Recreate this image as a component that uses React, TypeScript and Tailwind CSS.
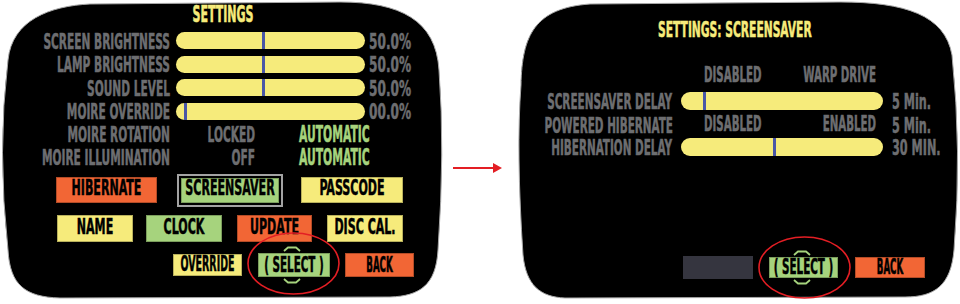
import React from "react";

const Y = "bg-[#f6eb7b]";

function Lbl({ children, cls = "text-[11.8px] scale-y-[1.75]", color = "text-[#6d6e71]" }: { children: React.ReactNode; cls?: string; color?: string }) {
  return <span className={"inline-block leading-[0.75] whitespace-nowrap [-webkit-text-stroke:0.3px_currentColor] " + cls + " " + color}>{children}</span>;
}

function Shape({ d }: { d: string }) {
  return (
    <svg className="absolute inset-0 overflow-visible" width="100%" height="100%">
      <path d={d} fill="#000" stroke="#a8a8a8" strokeWidth="1" />
    </svg>
  );
}

function Btn({ cls, children, tcls = "text-[12.3px] scale-y-[1.67]" }: { cls: string; children: React.ReactNode; tcls?: string }) {
  return (
    <div className={"flex items-center justify-center border border-black/25 " + cls}>
      <Lbl cls={tcls} color="text-black">{children}</Lbl>
    </div>
  );
}

function Chevron({ up }: { up: boolean }) {
  return (
    <svg width="18" height="6" viewBox="0 0 18 6">
      <path d={up ? "M1 5 L5 1.5 L13 1.5 L17 5" : "M1 1 L5 4.5 L13 4.5 L17 1"} fill="none" stroke="#a6d37d" strokeWidth="1.8" />
    </svg>
  );
}

function Select({ cls }: { cls: string }) {
  return (
    <div className={"relative " + cls}>
      <div className="absolute left-0 right-[4px] -top-[7px] flex justify-center"><Chevron up /></div>
      <div className="h-full flex items-center justify-center bg-[#a6d37d] border border-black/25">
        <Lbl cls="text-[11.5px] scale-y-[1.8]" color="text-black">(&nbsp;SELECT&nbsp;)</Lbl>
      </div>
      <div className="absolute left-0 right-[4px] -bottom-[7px] flex justify-center"><Chevron up={false} /></div>
      <svg className="absolute -left-[11px] -top-[21px] pointer-events-none" width="93" height="63" viewBox="0 0 93 63">
        <ellipse cx="46.5" cy="31.5" rx="45.5" ry="30.5" fill="none" stroke="#e31e24" strokeWidth="1.6" />
      </svg>
    </div>
  );
}

function BarRow({ label, marker, value }: { label: string; marker: string; value: string }) {
  return (
    <div className="h-[23.5px] flex items-center">
      <div className="w-[168px] text-right"><Lbl>{label}</Lbl></div>
      <div className={"ml-[6px] w-[189px] h-[17px] rounded-full relative " + Y}>
        <div className={"absolute top-0 bottom-0 w-[3px] bg-[#4a56a6] " + marker} />
      </div>
      <div className="ml-[4px]"><Lbl cls="text-[13.5px] scale-y-[1.52]">{value}</Lbl></div>
    </div>
  );
}

function OptRow({ label, mid }: { label: string; mid: string }) {
  return (
    <div className="h-[22.5px] flex items-center">
      <div className="w-[168px] text-right"><Lbl>{label}</Lbl></div>
      <div className="w-[85px] text-right"><Lbl>{mid}</Lbl></div>
      <div className="ml-[44px]"><Lbl cls="text-[12px] scale-y-[1.85]" color="text-[#a6d37d]">AUTOMATIC</Lbl></div>
    </div>
  );
}

const RL = "text-[11.6px] scale-y-[1.89]";
const RV = "text-[12.5px] scale-y-[1.75]";
const RH = "text-[11.4px] scale-y-[1.92]";
const SB = "text-[9.6px] scale-y-[2.25]";

export default function App() {
  return (
    <div className="w-[960px] h-[304px] bg-white flex pt-[2px] font-['DejaVu_Sans_Condensed','DejaVu_Sans',sans-serif] font-bold overflow-hidden">
      {/* Left screen */}
      <div className="relative ml-[2px] w-[440px] h-[296px] shrink-0">
        <Shape d="M 88 2 L 338 0 C 398 0 434 18 437 68 Q 443 148 436 248 C 434 283 418 294 388 295 L 58 296 C 23 295 8 283 6 248 Q -5 148 6 58 C 10 18 48 4 88 2 Z" />
        <div className="relative flex flex-col pt-[1px]">
          <div className="h-[26px] flex items-center justify-center pl-[2px]">
            <Lbl cls="text-[12.25px] scale-y-[1.9]" color="text-[#f6eb7b]">SETTINGS</Lbl>
          </div>
          <BarRow label="SCREEN BRIGHTNESS" marker="left-[86px]" value="50.0%" />
          <BarRow label="LAMP BRIGHTNESS" marker="left-[86px]" value="50.0%" />
          <BarRow label="SOUND LEVEL" marker="left-[86px]" value="50.0%" />
          <BarRow label="MOIRE OVERRIDE" marker="left-[8px]" value="00.0%" />
          <OptRow label="MOIRE ROTATION" mid="LOCKED" />
          <OptRow label="MOIRE ILLUMINATION" mid="OFF" />

          <div className="mt-[9px] h-[26px] flex items-center pl-[54px]">
            <Btn cls="w-[101px] h-[26px] bg-[#f26635]">HIBERNATE</Btn>
            <div className="ml-[20px] w-[106px] h-[33px] border-2 border-[#a3a3a3] p-[2px]">
              <Btn cls="w-full h-full bg-[#a6d37d]">SCREENSAVER</Btn>
            </div>
            <Btn cls={"ml-[18px] w-[102px] h-[26px] " + Y}>PASSCODE</Btn>
          </div>

          <div className="mt-[12px] h-[27px] flex items-center pl-[55px]">
            <Btn cls={"w-[76px] h-[27px] " + Y}>NAME</Btn>
            <Btn cls="ml-[13px] w-[76px] h-[27px] bg-[#a6d37d]">CLOCK</Btn>
            <Btn cls="ml-[15px] w-[75px] h-[27px] bg-[#f26635]">UPDATE</Btn>
            <Btn cls={"ml-[15px] w-[76px] h-[27px] " + Y}>DISC CAL.</Btn>
          </div>

          <div className="mt-[11px] h-[24px] flex items-center pl-[171px]">
            <Btn cls={"w-[69px] h-[22px] " + Y} tcls="text-[10.5px] scale-y-[1.95]">OVERRIDE</Btn>
            <Select cls="ml-[16px] w-[72px] h-[24px]" />
            <Btn cls="ml-[15px] w-[69px] h-[24px] bg-[#f26635]" tcls={SB}>BACK</Btn>
          </div>
        </div>
      </div>

      {/* Arrow */}
      <div className="w-[77px] shrink-0 flex flex-col">
        <svg className="mt-[161px] ml-[11px]" width="50" height="10" viewBox="0 0 50 10">
          <line x1="0" y1="5" x2="42" y2="5" stroke="#e31e24" strokeWidth="2" />
          <polygon points="40,0 49,5 40,10" fill="#e31e24" />
        </svg>
      </div>

      {/* Right screen */}
      <div className="relative w-[439px] h-[296px] shrink-0">
        <Shape d="M 71 2 L 321 0 C 386 0 426 13 433 53 Q 443 148 435 248 C 432 283 416 295 386 295 L 46 296 C 21 295 7 283 4 253 Q -3 148 2 83 C 3 33 16 6 71 2 Z" />
        <div className="relative flex flex-col pt-[16px]">
          <div className="h-[24px] flex items-center pl-[139px]">
            <Lbl cls="text-[11.9px] scale-y-[1.85]" color="text-[#f6eb7b]">SETTINGS: SCREENSAVER</Lbl>
          </div>
          <div className="mt-[22px] h-[22px] flex items-center">
            <div className="w-[153px]" />
            <div className="ml-[9px] w-[202px] flex justify-between pl-[23px] pr-[7px]">
              <Lbl cls={RH}>DISABLED</Lbl>
              <Lbl cls={RH}>WARP DRIVE</Lbl>
            </div>
          </div>
          <div className="h-[30px] flex items-center">
            <div className="w-[153px] text-right"><Lbl cls={RL}>SCREENSAVER DELAY</Lbl></div>
            <div className={"ml-[9px] w-[202px] h-[18px] rounded-full relative " + Y}>
              <div className="absolute top-0 bottom-0 left-[22px] w-[3px] bg-[#4a56a6]" />
            </div>
            <div className="ml-[9px]"><Lbl cls={RV}>5 Min.</Lbl></div>
          </div>
          <div className="h-[17px] flex items-center">
            <div className="w-[154px] text-right"><Lbl cls={RL}>POWERED HIBERNATE</Lbl></div>
            <div className="ml-[8px] w-[202px] flex justify-between pl-[23px] pr-[7px]">
              <Lbl cls={RH}>DISABLED</Lbl>
              <Lbl cls={RH}>ENABLED</Lbl>
            </div>
            <div className="ml-[9px]"><Lbl cls={RV}>5 Min.</Lbl></div>
          </div>
          <div className="h-[28px] flex items-center">
            <div className="w-[153px] text-right"><Lbl cls={RL}>HIBERNATION DELAY</Lbl></div>
            <div className={"ml-[9px] w-[202px] h-[18px] rounded-full relative " + Y}>
              <div className="absolute top-0 bottom-0 left-[92px] w-[3px] bg-[#4a56a6]" />
            </div>
            <div className="ml-[9px]"><Lbl cls={RV}>30 MIN.</Lbl></div>
          </div>
          <div className="mt-[95px] h-[22px] flex items-center">
            <div className="ml-[164px] w-[70px] h-[23px] bg-[#35353f]" />
            <Select cls="ml-[16px] w-[69px] h-[21px]" />
            <Btn cls="ml-[17px] w-[70px] h-[21px] bg-[#f26635]" tcls={SB}>BACK</Btn>
          </div>
        </div>
      </div>
    </div>
  );
}
